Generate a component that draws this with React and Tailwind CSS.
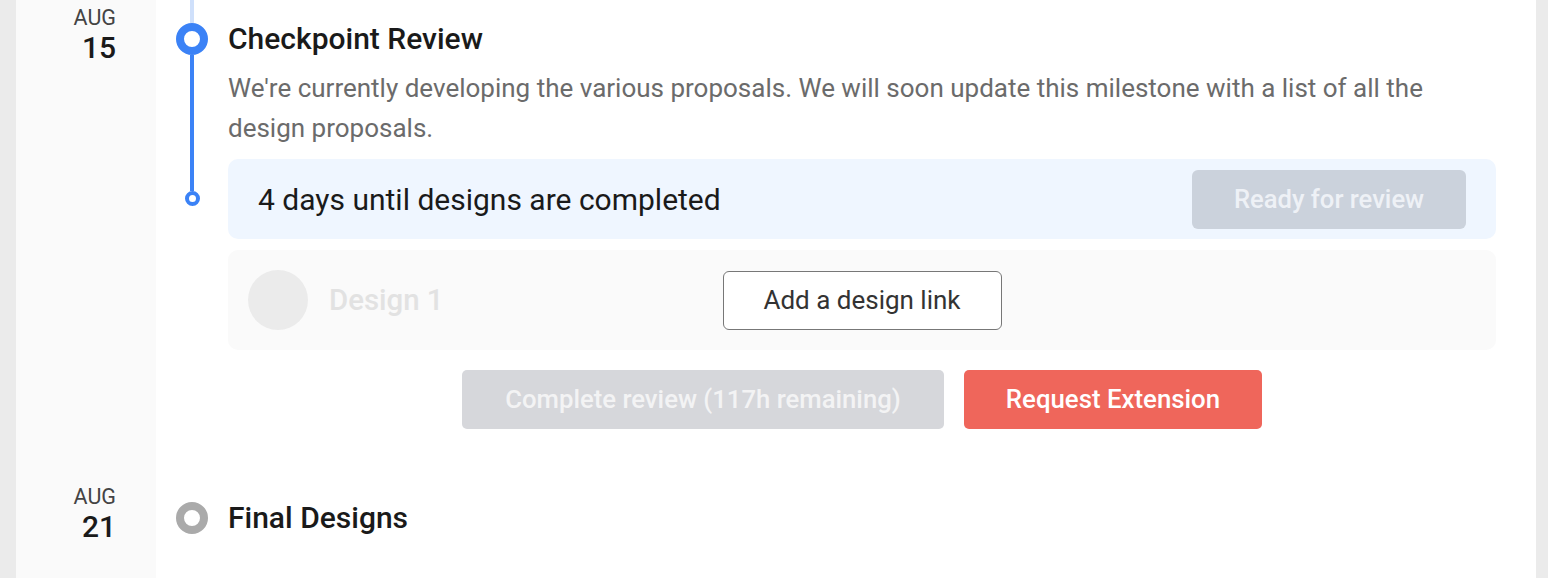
export default function App() {
  const font = { fontFamily: "Roboto, 'Liberation Sans', sans-serif" };
  return (
    <div className="flex h-[578px] w-full overflow-hidden bg-[#ebebeb] pl-[16px] pr-[12px]" style={font}>
      <div className="flex flex-1 flex-col bg-white">
        {/* Row 1 */}
        <div className="flex h-[479px]">
          <div className="flex w-[140px] flex-col items-end bg-[#fafafa] pr-[40px] pt-[6px]">
            <div className="text-[21.5px] leading-[24px] text-[#444]">AUG</div>
            <div className="text-[30px] font-medium leading-[36px] text-[#1a1a1a]">15</div>
          </div>
          <div className="flex w-[72px] flex-col items-center">
            <div className="h-[23px] w-[4px] bg-[#cfe0fb]" />
            <div className="h-[32px] w-[32px] rounded-full border-[8px] border-[#3b82f6]" />
            <div className="h-[136px] w-[4px] bg-[#3b82f6]" />
            <div className="h-[15px] w-[15px] rounded-full border-[4px] border-[#3b82f6]" />
          </div>
          <div className="flex flex-1 flex-col pr-[40px] pt-[22px]">
            <div className="text-[30px] font-medium leading-[34px] text-[#1a1a1a]">Checkpoint Review</div>
            <p className="mt-[12px] pr-[40px] text-[26px] leading-[40px] text-[#6b6b6b]">
              We're currently developing the various proposals. We will soon update this milestone with a list of all the design proposals.
            </p>
            <div className="mt-[11px] flex h-[80px] items-center justify-between rounded-[10px] bg-[#eff6ff] pl-[30px] pr-[30px]">
              <div className="text-[30px] text-[#1a1a1a]">4 days until designs are completed</div>
              <button className="h-[59px] w-[274px] rounded-[6px] bg-[#cbd2dc] text-[25.6px] font-medium text-[#eef1f6]">
                Ready for review
              </button>
            </div>
            <div className="relative mt-[11px] flex h-[100px] items-center rounded-[10px] bg-[#fafafa] px-[20px]">
              <div className="h-[60px] w-[60px] rounded-full bg-[#ebebeb]" />
              <div className="ml-[21px] text-[29.4px] font-medium text-[#e2e2e2]">Design 1</div>
              <div className="absolute inset-0 flex items-center justify-center">
                <button className="h-[59px] w-[279px] rounded-[6px] border-[1.5px] border-[#777] bg-white text-[26px] text-[#333]">
                  Add a design link
                </button>
              </div>
            </div>
            <div className="mt-[20px] flex justify-center gap-[20px]">
              <button className="h-[59px] w-[482px] rounded-[5px] bg-[#d6d7db] text-[25.7px] font-medium text-[#f3f3f4]">
                Complete review (117h remaining)
              </button>
              <button className="h-[59px] w-[298px] rounded-[5px] bg-[#ef665b] text-[25.8px] font-medium text-white">
                Request Extension
              </button>
            </div>
          </div>
        </div>
        {/* Row 2 */}
        <div className="flex flex-1">
          <div className="flex w-[140px] flex-col items-end bg-[#fafafa] pr-[40px] pt-[6px]">
            <div className="text-[21.5px] leading-[24px] text-[#444]">AUG</div>
            <div className="text-[30px] font-medium leading-[36px] text-[#1a1a1a]">21</div>
          </div>
          <div className="flex w-[72px] flex-col items-center pt-[23px]">
            <div className="h-[32px] w-[32px] rounded-full border-[8px] border-[#aaaaaa]" />
          </div>
          <div className="flex flex-1 flex-col pt-[22px]">
            <div className="text-[30px] font-medium leading-[34px] text-[#1a1a1a]">Final Designs</div>
          </div>
        </div>
      </div>
    </div>
  );
}
